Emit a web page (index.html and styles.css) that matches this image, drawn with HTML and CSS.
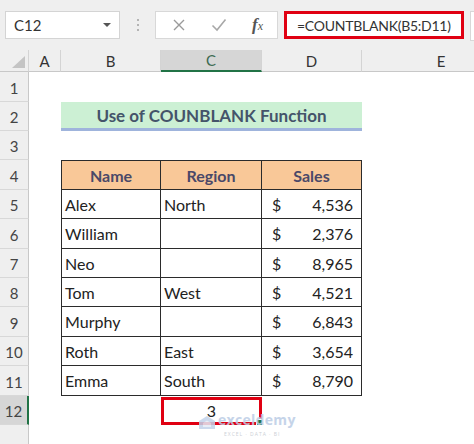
FILE: index.html
```html
<!DOCTYPE html>
<html>
<head>
<meta charset="utf-8">
<link rel="stylesheet" href="styles.css">
</head>
<body>
<div class="app">
  <div class="toolbar">
    <div class="namebox"><span>C12</span><span class="caret"></span></div>
    <div class="dots"><i></i><i></i><i></i></div>
    <div class="btnbox">
      <svg class="ico" width="14" height="14" viewBox="0 0 14 14"><path d="M2 2 L12 12 M12 2 L2 12" stroke="#9a9a9a" stroke-width="1.4" fill="none"/></svg>
      <svg class="ico" width="16" height="14" viewBox="0 0 16 14"><path d="M1.5 7.5 L6 12 L14.5 1.5" stroke="#a8a8a8" stroke-width="1.6" fill="none"/></svg>
      <span class="fx"><i>f</i><i class="x">x</i></span>
    </div>
    <div class="formula">=COUNTBLANK(B5:D11)</div>
    <div class="rightbox"></div>
  </div>

  <div class="sheet">
    <div class="corner"><span class="tri"></span></div>
    <div class="colhead">A</div>
    <div class="colhead">B</div>
    <div class="colhead sel">C</div>
    <div class="colhead">D</div>
    <div class="colhead last">E</div>

    <div class="rowhead">1</div><div></div><div></div><div></div><div></div><div></div>

    <div class="rowhead">2</div><div></div><div class="title">Use of COUNBLANK Function</div><div></div>

    <div class="rowhead">3</div><div></div><div></div><div></div><div></div><div></div>

    <div class="rowhead">4</div><div></div>
    <div class="th tl">Name</div><div class="th">Region</div><div class="th">Sales</div><div></div>

    <div class="rowhead">5</div><div></div>
    <div class="td tl">Alex</div><div class="td">North</div><div class="td num"><span>$</span><span>4,536</span></div><div></div>

    <div class="rowhead">6</div><div></div>
    <div class="td tl">William</div><div class="td"></div><div class="td num"><span>$</span><span>2,376</span></div><div></div>

    <div class="rowhead">7</div><div></div>
    <div class="td tl">Neo</div><div class="td"></div><div class="td num"><span>$</span><span>8,965</span></div><div></div>

    <div class="rowhead">8</div><div></div>
    <div class="td tl">Tom</div><div class="td">West</div><div class="td num"><span>$</span><span>4,521</span></div><div></div>

    <div class="rowhead">9</div><div></div>
    <div class="td tl">Murphy</div><div class="td"></div><div class="td num"><span>$</span><span>6,843</span></div><div></div>

    <div class="rowhead">10</div><div></div>
    <div class="td tl">Roth</div><div class="td">East</div><div class="td num"><span>$</span><span>3,654</span></div><div></div>

    <div class="rowhead">11</div><div></div>
    <div class="td tl">Emma</div><div class="td">South</div><div class="td num"><span>$</span><span>8,790</span></div><div></div>

    <div class="rowhead selrow">12</div><div></div><div></div>
    <div class="result"><span class="rv">3</span><span class="handle"></span></div><div></div><div></div>

    <div class="rowhead"></div><div></div><div></div><div></div><div></div><div></div>
  </div>

  <div class="watermark">
    <svg class="wm-ico" width="16" height="13" viewBox="0 0 16 13"><path d="M8 0 L16 5 L16 13 L0 13 L0 5 Z" fill="#c3d3ea"/><path d="M4 7 L8 4.5 L12 7 L12 11 L4 11 Z" fill="#e4ecf6"/></svg>
    <div class="wm-text"><div class="wm-main">exceldemy</div><div class="wm-sub">EXCEL · DATA · BI</div></div>
  </div>
</div>
</body>
</html>
```

FILE: styles.css
```css
html, body {
  margin: 0;
  padding: 0;
  background: #ffffff;
}
.app {
  position: relative;
  width: 474px;
  height: 444px;
  overflow: hidden;
  font-family: Lato, "Open Sans", sans-serif;
}
.toolbar {
  height: 50px;
  background: #efefef;
  display: flex;
  align-items: flex-start;
  padding-top: 11px;
  box-sizing: border-box;
  padding-left: 5px;
}
.namebox {
  width: 115px;
  height: 28px;
  background: #fff;
  border: 1px solid #d4d4d4;
  box-sizing: border-box;
  display: flex;
  align-items: center;
  justify-content: space-between;
  padding: 0 8px 0 8px;
  font-size: 15px;
  color: #333;
}
.caret {
  width: 0;
  height: 0;
  border-left: 4px solid transparent;
  border-right: 4px solid transparent;
  border-top: 4px solid #555;
}
.dots {
  width: 35px;
  height: 28px;
  display: flex;
  flex-direction: column;
  align-items: center;
  justify-content: center;
  gap: 3px;
}
.dots i {
  width: 2px;
  height: 2px;
  background: #b4b4b4;
  display: block;
}
.btnbox {
  width: 123px;
  height: 28px;
  background: #fff;
  border: 1px solid #d8d8d8;
  box-sizing: border-box;
  display: flex;
  align-items: center;
  padding-left: 16px;
  gap: 25px;
}
.fx {
  font-family: "Liberation Serif", serif;
  color: #555;
  font-size: 17px;
  line-height: 17px;
  font-weight: 700;
}
.fx .x {
  font-size: 12px;
  font-weight: 400;
}
.formula {
  margin-left: 6px;
  width: 180px;
  height: 28px;
  box-sizing: border-box;
  background: #fff;
  border: 3px solid #e00012;
  font-size: 14px;
  letter-spacing: -0.25px;
  color: #333;
  display: flex;
  align-items: center;
  padding-left: 10px;
  white-space: nowrap;
  overflow: hidden;
}
.rightbox {
  margin-left: 6px;
  flex: 1;
  height: 28px;
  background: #fff;
  border: 1px solid #d8d8d8;
  border-right: none;
}
.sheet {
  display: grid;
  grid-template-columns: 29px 32px 100px 101px 100px 158px;
  grid-template-rows: 22px 30px 29px 29px 30px 29px 30px 29px 29px 30px 29px 30px 29px 30px;
}
.corner {
  background: #efefef;
  border-right: 1px solid #d4d4d4;
  border-bottom: 1px solid #c8c8c8;
  position: relative;
}
.tri {
  position: absolute;
  right: 3px;
  bottom: 3px;
  width: 0;
  height: 0;
  border-left: 13px solid transparent;
  border-bottom: 12px solid #c4c4c4;
}
.colhead {
  background: #efefef;
  border-right: 1px solid #d4d4d4;
  border-bottom: 1px solid #c8c8c8;
  box-sizing: border-box;
  display: flex;
  align-items: center;
  justify-content: center;
  font-size: 15px;
  color: #333;
}
.colhead.last {
  border-right: none;
}
.colhead.sel {
  background: #d6d6d6;
  border-bottom: 2px solid #217346;
  color: #3d6b52;
}
.rowhead {
  background: #efefef;
  border-right: 1px solid #c8c8c8;
  border-bottom: 1px solid #d8d8d8;
  box-sizing: border-box;
  display: flex;
  align-items: center;
  justify-content: center;
  font-size: 15px;
  color: #444;
  padding-top: 2px;
}
.rowhead.selrow {
  background: #d6d6d6;
  border-right: 2px solid #217346;
}
.title {
  grid-column: 3 / 6;
  background: #ccf0d4;
  border-bottom: 3px solid #9fb4dc;
  box-sizing: border-box;
  display: flex;
  align-items: center;
  justify-content: center;
  font-weight: 700;
  font-size: 17px;
  color: #44546a;
}
.th, .td {
  box-sizing: border-box;
  border-right: 1px solid #2b2b2b;
  border-bottom: 1px solid #2b2b2b;
  display: flex;
  align-items: center;
  font-size: 16px;
  color: #222;
  padding-left: 3px;
}
.tl {
  border-left: 1px solid #2b2b2b;
}
.th {
  background: #f9c898;
  border-top: 1px solid #2b2b2b;
  justify-content: center;
  font-weight: 700;
  color: #4a4868;
  padding-left: 0;
}
.num {
  justify-content: space-between;
  padding-left: 10px;
  padding-right: 8px;
}
.result {
  position: relative;
  box-sizing: border-box;
  border: 3px solid #e00012;
  display: flex;
  align-items: center;
  justify-content: center;
  font-size: 16px;
  color: #222;
  margin-top: 1px;
  padding-bottom: 2px;
}
.rv {
  line-height: 13px;
}
.handle {
  position: absolute;
  right: -4px;
  bottom: -4px;
  width: 5px;
  height: 5px;
  background: #217346;
  border: 1px solid #fff;
}
.watermark {
  position: absolute;
  left: 199px;
  top: 410px;
  display: flex;
  align-items: flex-start;
  gap: 3px;
  opacity: 0.85;
}
.wm-ico {
  margin-top: 6px;
}
.wm-main {
  font-family: "Open Sans", sans-serif;
  font-weight: 700;
  font-size: 14px;
  line-height: 19px;
  color: #bccde6;
  letter-spacing: 0.3px;
}
.wm-sub {
  margin-top: 3px;
  font-family: "Open Sans", sans-serif;
  font-size: 5px;
  line-height: 5px;
  color: #c5c9d0;
  letter-spacing: 1px;
  padding-left: 6px;
}
```
